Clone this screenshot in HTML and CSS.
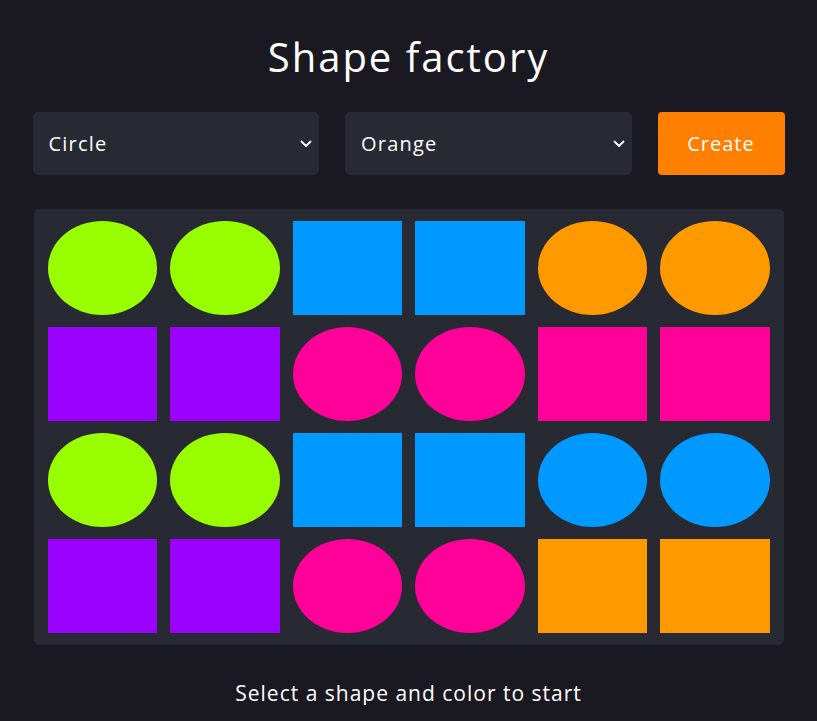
FILE: index.html
```html
<!DOCTYPE html>
<html lang="en">
<head>
<meta charset="utf-8">
<title>Shape factory</title>
<link rel="stylesheet" href="styles.css">
</head>
<body>
<main class="app">
  <h1 class="title">Shape factory</h1>
  <div class="controls">
    <div class="select-wrap">
      <select class="select">
        <option>Circle</option>
        <option>Square</option>
      </select>
      <svg class="chevron" width="12" height="8" viewBox="0 0 12 8"><path d="M1.5 1.5 L6 6 L10.5 1.5" fill="none" stroke="#fff" stroke-width="1.8" stroke-linecap="round" stroke-linejoin="round"/></svg>
    </div>
    <div class="select-wrap">
      <select class="select">
        <option>Orange</option>
        <option>Green</option>
      </select>
      <svg class="chevron" width="12" height="8" viewBox="0 0 12 8"><path d="M1.5 1.5 L6 6 L10.5 1.5" fill="none" stroke="#fff" stroke-width="1.8" stroke-linecap="round" stroke-linejoin="round"/></svg>
    </div>
    <button class="create">Create</button>
  </div>
  <section class="board">
    <div class="shape circle green"></div>
    <div class="shape circle green"></div>
    <div class="shape square blue"></div>
    <div class="shape square blue"></div>
    <div class="shape circle orange"></div>
    <div class="shape circle orange"></div>

    <div class="shape square purple"></div>
    <div class="shape square purple"></div>
    <div class="shape circle pink"></div>
    <div class="shape circle pink"></div>
    <div class="shape square pink"></div>
    <div class="shape square pink"></div>

    <div class="shape circle green"></div>
    <div class="shape circle green"></div>
    <div class="shape square blue"></div>
    <div class="shape square blue"></div>
    <div class="shape circle blue"></div>
    <div class="shape circle blue"></div>

    <div class="shape square purple"></div>
    <div class="shape square purple"></div>
    <div class="shape circle pink"></div>
    <div class="shape circle pink"></div>
    <div class="shape square orange"></div>
    <div class="shape square orange"></div>
  </section>
  <p class="status">Select a shape and color to start</p>
</main>
</body>
</html>
```

FILE: styles.css
```css
* { box-sizing: border-box; }
html, body { margin: 0; padding: 0; }
body {
  background: #1a1921;
  color: #ffffff;
  font-family: "Open Sans", "Noto Sans", sans-serif;
}
.app {
  width: 752px;
  margin: 0 auto;
  display: flex;
  flex-direction: column;
  align-items: stretch;
}
.title {
  margin: 30px 0 0;
  height: 54px;
  line-height: 54px;
  font-size: 40px;
  font-weight: 400;
  text-align: center;
  letter-spacing: 2px;
}
.controls {
  margin-top: 28px;
  display: flex;
  gap: 26px;
  height: 63px;
}
.select-wrap {
  position: relative;
  flex: 0 0 286.5px;
}
.select {
  appearance: none;
  -webkit-appearance: none;
  width: 100%;
  height: 100%;
  border: none;
  border-radius: 5px;
  background: #272a33;
  color: #fff;
  font-family: inherit;
  font-size: 20px;
  letter-spacing: 1.2px;
  padding: 0 16px;
  outline: none;
}
.chevron {
  position: absolute;
  right: 7px;
  top: 28px;
}
.create {
  flex: 1;
  border: none;
  border-radius: 4px;
  background: #ff7f00;
  color: #fff;
  font-family: inherit;
  font-size: 20px;
  letter-spacing: 1px;
  padding: 0;
}
.board {
  margin: 34px 1px 0;
  background: #272a33;
  border-radius: 5px;
  padding: 12px 14px;
  display: grid;
  grid-template-columns: repeat(6, 1fr);
  grid-auto-rows: 94px;
  column-gap: 13px;
  row-gap: 12px;
}
.circle { border-radius: 50%; }
.green { background: #99ff00; }
.blue { background: #0099ff; }
.orange { background: #ff9900; }
.purple { background: #9900ff; }
.pink { background: #ff0099; }
.status {
  margin: 36px 0 0;
  text-align: center;
  font-size: 21px;
  line-height: 24px;
  letter-spacing: 1px;
}
```
